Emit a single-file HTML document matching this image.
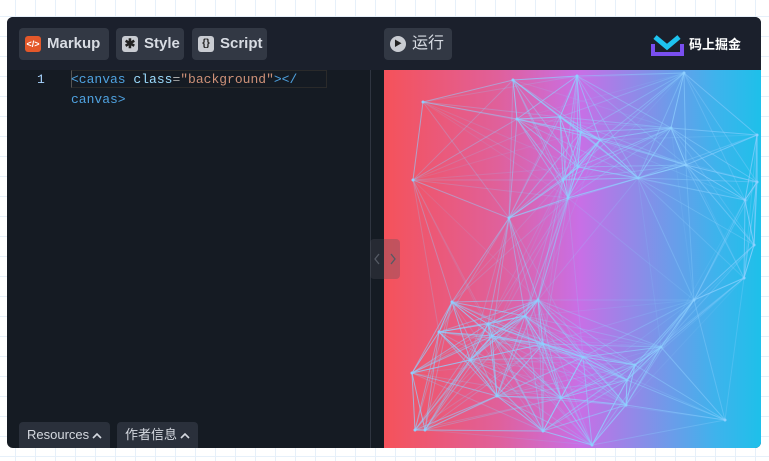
<!DOCTYPE html>
<html><head><meta charset="utf-8"><style>
*{margin:0;padding:0;box-sizing:border-box}
body{width:769px;height:461px;overflow:hidden;background:#fff;
background-image:linear-gradient(#e6f0fa 1px,transparent 1px),linear-gradient(90deg,#e6f0fa 1px,transparent 1px);background-size:20px 20px;background-position:-5px -4px;
font-family:"Liberation Sans","Noto Sans CJK SC",sans-serif;position:relative}
.frame{position:absolute;left:7px;top:17px;width:754px;height:431px;background:#151b23;border-radius:6px;overflow:hidden}
.hdr{position:absolute;left:0;top:0;width:754px;height:53px;background:#1b202c}
.btn{position:absolute;top:11px;height:32px;background:#323844;border-radius:4px;color:#d8dce3;font-weight:bold;font-size:15px;line-height:32px;padding-left:28px}
.ic{position:absolute;left:6px;top:8px;width:16px;height:16px;border-radius:3px;font-size:10px;line-height:16px;text-align:center;color:#222}
.code{position:absolute;left:0;top:53px;font-family:"Liberation Mono",monospace;font-size:13px;color:#4fa2e0}
.prev{position:absolute;left:377px;top:53px;width:377px;height:378px;background:linear-gradient(90deg,#f5525a 0%,#e0609a 30%,#c86fe6 52%,#8b8ce8 68%,#3eb3ec 88%,#1ec0ea 100%)}
.bb{position:absolute;top:405px;height:26px;background:#2a303b;border-radius:4px 4px 0 0;color:#d5d9e0;font-size:13px;line-height:26px;padding:0 8px}
.bb svg{vertical-align:middle;margin-left:3px}
</style></head><body>
<div class="frame">
<div class="hdr">
<div class="btn" style="left:12px;width:90px"><span class="ic" style="background:#e4582a;color:#fff;font-size:9px">&lt;/&gt;</span>Markup</div>
<div class="btn" style="left:109px;width:68px"><span class="ic" style="background:#c9ccd2;font-size:13px">✱</span>Style</div>
<div class="btn" style="left:185px;width:75px"><span class="ic" style="background:#c9ccd2;font-size:10px">{}</span>Script</div>
<div class="btn" style="left:377px;width:68px;font-weight:normal;font-size:16px"><span class="ic" style="background:#c9ccd2;border-radius:50%;font-size:8px">▶</span>运行</div>
<svg style="position:absolute;left:644px;top:15px" width="33" height="25"><path d="M4 5l12 10 12-10" stroke="#1ec3f0" stroke-width="5" fill="none"/><path d="M2 12v10h29v-10" stroke="#7a4ff0" stroke-width="4" fill="none"/></svg>
<div style="position:absolute;left:682px;top:17px;color:#fff;font-size:13px;font-weight:bold">码上掘金</div>
</div>
<div class="code">
<div style="position:absolute;left:30px;top:2px;color:#a8d4ff">1</div>
<div style="position:absolute;left:64px;top:0;width:256px;height:18px;border:1px solid #2a2a2a;border-left-color:#555"></div>
<div style="position:absolute;left:64px;top:2px;white-space:nowrap">&lt;canvas <span style="color:#9cdcfe">class</span><span style="color:#aaa">=</span><span style="color:#ce9178">"background"</span>&gt;&lt;/</div>
<div style="position:absolute;left:64px;top:22px">canvas&gt;</div>
</div>
<div style="position:absolute;left:363px;top:53px;width:1px;height:378px;background:#2f3540"></div>
<div class="prev"><svg id="s" width="377" height="378"></svg></div>
<div style="position:absolute;left:363px;top:222px;width:30px;height:40px;background:rgba(80,80,90,.3);border-radius:4px"><svg width="30" height="40"><path d="M9 15l-4 5 4 5M21 15l4 5-4 5" stroke="#555a64" stroke-width="1.3" fill="none"/></svg></div>
<div class="bb" style="left:12px">Resources<svg width="10" height="8"><path d="M1 6l4-4 4 4" stroke="#d5d9e0" stroke-width="1.6" fill="none"/></svg></div>
<div class="bb" style="left:110px">作者信息<svg width="10" height="8"><path d="M1 6l4-4 4 4" stroke="#d5d9e0" stroke-width="1.6" fill="none"/></svg></div>
</div>
<script>
var P=[[423,102],[513,80],[577,76],[684,73],[413,180],[517,119],[560,117],[581,132],[578,167],[563,180],[568,198],[509,218],[638,178],[671,128],[686,165],[757,135],[757,182],[754,245],[744,278],[694,300],[452,302],[538,300],[525,316],[488,324],[492,336],[439,332],[412,373],[425,430],[497,396],[543,344],[583,357],[661,347],[635,365],[561,398],[543,431],[592,445],[627,380],[626,405],[725,420],[415,430],[745,200],[600,140],[470,360]];
var s='';for(var i=0;i<P.length;i++){var a=[P[i][0]-384,P[i][1]-70];s+='<circle cx="'+a[0]+'" cy="'+a[1]+'" r="1.5" fill="#8fd0ff"/>';for(var j=i+1;j<P.length;j++){var dx=P[i][0]-P[j][0],dy=P[i][1]-P[j][1],d=Math.sqrt(dx*dx+dy*dy);if(d<175){s+='<line x1="'+a[0]+'" y1="'+a[1]+'" x2="'+(P[j][0]-384)+'" y2="'+(P[j][1]-70)+'" stroke="#8fd0ff" stroke-opacity="'+(1-d/200).toFixed(2)+'" stroke-width="1"/>';}}}
document.getElementById('s').innerHTML=s;
</script>
</body></html>
